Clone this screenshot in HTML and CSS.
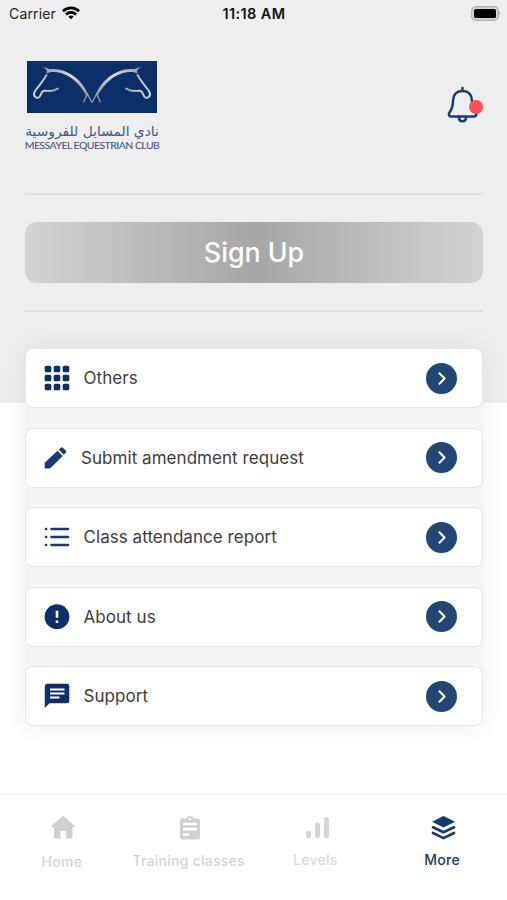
FILE: index.html
```
<!DOCTYPE html>
<html lang="en">
<head>
  <meta charset="utf-8">
  <title>Messayel Equestrian Club</title>
  <link rel="stylesheet" href="styles.css">
</head>
<body>
  <div class="status-bar">
    <div class="carrier">
      <span>Carrier</span>
      <svg width="18" height="14" viewBox="0 0 18 14" fill="none" stroke="#000" stroke-width="2.6">
        <path d="M1 5.2C5.5 .8 12.500 .8 17 5.200"/>
        <path d="M4 8.500C6.800 5.700 11.200 5.700 14 8.500"/>
        <path d="M6.300 10.500Q9 8.300 11.700 10.500L9 13.300z" fill="#000" stroke="none"/>
      </svg>
    </div>
    <span class="time">11:18 AM</span>
    <svg class="battery" width="30" height="15" viewBox="0 0 30 15">
      <rect x=".8" y=".8" width="26.400" height="13.400" rx="4" fill="#d8d8d8" stroke="#b4b4b4" stroke-width="1.500"/>
      <rect x="3" y="3" width="22" height="9" rx="1.500" fill="#000"/>
      <path d="M28.200 5.200Q30.400 7.500 28.200 9.800z" fill="#aaa"/>
    </svg>
  </div>

  <header class="header">
    <div class="logo">
      <svg width="130" height="52" viewBox="0 0 130 52">
        <defs>
          <linearGradient id="silver" x1="0" y1="0" x2="1" y2="1">
            <stop offset="0" stop-color="#8f98a5"/>
            <stop offset=".45" stop-color="#dcdde0"/>
            <stop offset="1" stop-color="#8c8e96"/>
          </linearGradient>
          <g id="horse">
            <path d="M16.500 5.800L23 8.200C40 6.500 55 19 61 33L60 36C52 21 40 9.800 23 11.200L19.500 12.500L20 9.700z" fill="url(#silver)"/>
            <path d="M19.500 14C16 20 12 25 8 30C5.500 34.500 8.500 38 12 36.300C14.500 34.500 13.500 30.500 17 29.800C22 29.500 25 31.500 31 27.500" fill="none" stroke="url(#silver)" stroke-width="1.900" stroke-linecap="round"/>
            <path d="M60.500 32Q58.500 37 56.500 41.500M60.500 33L65 41.500" fill="none" stroke="#9ca3af" stroke-width="1.200"/>
          </g>
        </defs>
        <rect width="130" height="52" fill="#0c2f68"/>
        <use href="#horse"/>
        <use href="#horse" transform="matrix(-1 0 0 1 130 0)"/>
      </svg>
      <span class="logo-arabic" lang="ar" dir="rtl">نادي المسايل للفروسية</span>
      <span class="logo-name">MESSAYEL EQUESTRIAN CLUB</span>
    </div>
    <div class="bell">
      <svg width="32" height="38" viewBox="0 0 32 38" fill="none" stroke="#153d71" stroke-width="2.500" stroke-linecap="round" stroke-linejoin="round">
        <path d="M15.500 2v3M15.500 5C9 5 6 9.500 6 15C6 21 5 23 2.500 26.500C1.200 28.500 2 30.500 4 30.500H27C29 30.500 30 28.500 28.700 26.500C26 23 25 21 25 15C25 9.500 22 5 15.500 5z"/>
        <path d="M12 31.500C12 36.500 19 36.500 19 31.500"/>
      </svg>
      <span class="dot"></span>
    </div>
  </header>

  <div class="signup">
    <button class="signup-button">Sign Up</button>
  </div>

  <main class="menu">
    <a class="card">
      <svg class="icon" viewBox="0 0 26 26" fill="#0d2f66">
        <rect x=".7" y=".7" width="6.600" height="6.600" rx="1.600"/><rect x="9.700" y=".7" width="6.600" height="6.600" rx="1.600"/><rect x="18.700" y=".7" width="6.600" height="6.600" rx="1.600"/>
        <rect x=".7" y="9.700" width="6.600" height="6.600" rx="1.600"/><rect x="9.700" y="9.700" width="6.600" height="6.600" rx="1.600"/><rect x="18.700" y="9.700" width="6.600" height="6.600" rx="1.600"/>
        <rect x=".7" y="18.700" width="6.600" height="6.600" rx="1.600"/><rect x="9.700" y="18.700" width="6.600" height="6.600" rx="1.600"/><rect x="18.700" y="18.700" width="6.600" height="6.600" rx="1.600"/>
      </svg>
      <span class="label">Others</span>
      <span class="arrow"><svg viewBox="0 0 30 30"><path d="M13 10l5 5-5 5"/></svg></span>
    </a>
    <a class="card">
      <svg class="icon" viewBox="0 0 26 26" fill="#163c70">
        <path d="M.7 17.800L13.500 5.800L18.700 11L6 23.500H2Q.7 23.500 .7 22.200z"/>
        <path d="M14.800 4.700L16.700 2.800Q17.800 1.800 18.900 2.800L21.700 5.600Q22.700 6.700 21.700 7.700L19.900 9.700z"/>
      </svg>
      <span class="label submit">Submit amendment request</span>
      <span class="arrow"><svg viewBox="0 0 30 30"><path d="M13 10l5 5-5 5"/></svg></span>
    </a>
    <a class="card">
      <svg class="icon" viewBox="0 0 26 26" fill="none" stroke="#153b70" stroke-width="2.600" stroke-linecap="round">
        <path d="M7.500 5h16.500M7.500 13h16.500M7.500 21h16.500M2 5h.1M2 13h.1M2 21h.1"/>
      </svg>
      <span class="label">Class attendance report</span>
      <span class="arrow"><svg viewBox="0 0 30 30"><path d="M13 10l5 5-5 5"/></svg></span>
    </a>
    <a class="card">
      <svg class="icon" viewBox="0 0 26 26">
        <circle cx="13" cy="12.700" r="12.400" fill="#0d2f66"/>
        <path d="M13 6.800v7M13 16.500v2.500" stroke="#fff" stroke-width="2.600"/>
      </svg>
      <span class="label">About us</span>
      <span class="arrow"><svg viewBox="0 0 30 30"><path d="M13 10l5 5-5 5"/></svg></span>
    </a>
    <a class="card">
      <svg class="icon" viewBox="0 0 26 26">
        <path d="M3.200 .8H23Q25.300 .8 25.300 3.100V18Q25.300 20.300 23 20.300H5.500L.8 25V3.300Q.8 .8 3.200 .8z" fill="#0d2f66"/>
        <path d="M6 6.500h14.500M6 10.500h14.500M6 14.500h9.500" stroke="#fff" stroke-width="2.200"/>
      </svg>
      <span class="label">Support</span>
      <span class="arrow"><svg viewBox="0 0 30 30"><path d="M13 10l5 5-5 5"/></svg></span>
    </a>
  </main>

  <nav class="tab-bar">
    <a class="tab home">
      <svg viewBox="0 0 28 28" fill="#d0d0d0"><path d="M14 1.500L26.500 13H23.500V23.500Q23.500 24.500 22.500 24.500H17V17H11.500V24.500H6Q5 24.500 5 23.500V13H1.500z"/></svg>
      <span>Home</span>
    </a>
    <a class="tab training">
      <svg viewBox="0 0 28 28">
        <path d="M6 4.500H10.500Q11.500 2 14 2T17.500 4.500H22Q24 4.500 24 6.500V23.500Q24 25.500 22 25.500H6Q4 25.500 4 23.500V6.500Q4 4.500 6 4.500z" fill="#d0d0d0"/>
        <circle cx="14" cy="5" r="1.300" fill="#fff"/>
        <path d="M7 10h14M7 15.200h14M7 20.500h6" stroke="#fff" stroke-width="2.700"/>
      </svg>
      <span>Training classes</span>
    </a>
    <a class="tab levels">
      <svg viewBox="0 0 28 28" stroke="#d4d4d4" stroke-width="5" stroke-linecap="round"><path d="M5.500 21.700v-2.500M14.500 21.700V11M23.500 21.700V5.500"/></svg>
      <span>Levels</span>
    </a>
    <a class="tab more active">
      <svg viewBox="0 0 28 28">
        <path d="M13.500 2L25 7.700L13.500 13.500L2 7.700z" fill="#153b70"/>
        <path d="M3 13.300L13.500 18.300L24 13.300M3 19L13.500 24.100L24 19" fill="none" stroke="#153b70" stroke-width="2.700" stroke-linecap="round" stroke-linejoin="round"/>
      </svg>
      <span>More</span>
    </a>
  </nav>
</body>
</html>
```
FILE: styles.css
```
* {
  box-sizing: border-box;
}

body {
  margin: 0;
  height: 900px;
  overflow: hidden;
  display: flex;
  flex-direction: column;
  font-family: Inter, "Noto Sans", sans-serif;
  color: #3d3d3d;
  background: linear-gradient(#eeeeee 403px, #ffffff 403px);
}

svg {
  display: block;
  flex: none;
}

.status-bar {
  height: 28px;
  padding: 0 6px 0 9px;
  display: grid;
  grid-template-columns: 1fr auto 1fr;
  align-items: center;
  font-size: 14px;
  line-height: 28px;
  color: #222;
}

.carrier {
  display: flex;
  align-items: center;
  gap: 6px;
  letter-spacing: 0.15px;
}

.carrier svg {
  margin-top: -3px;
}

.time {
  margin-right: 2px;
  font-size: 14.5px;
  font-weight: 600;
  letter-spacing: 0.4px;
  color: #111;
}

.battery {
  justify-self: end;
  margin-top: -1px;
}

.header {
  height: 165px;
  margin: 0 24px 0 25px;
  padding-top: 33px;
  display: flex;
  justify-content: space-between;
}

.logo {
  width: 134px;
  display: flex;
  flex-direction: column;
  align-items: center;
  white-space: nowrap;
  color: #425a82;
}

.logo-arabic {
  height: 17px;
  margin-top: 9px;
  font-family: "DejaVu Sans", sans-serif;
  font-size: 13.8px;
  line-height: 18px;
}

.logo-name {
  font-family: Lato, sans-serif;
  font-size: 10.4px;
  line-height: 12px;
  font-weight: 500;
  letter-spacing: -0.5px;
}

.bell {
  position: relative;
  width: 36px;
  height: 38px;
  margin-top: 25px;
}

.dot {
  position: absolute;
  top: 14px;
  right: 0;
  width: 14px;
  height: 14px;
  border-radius: 50%;
  background: #ff5058;
}

.signup {
  height: 119px;
  margin: 0 24px 0 25px;
  display: flex;
  align-items: center;
  border-top: 2px solid #e0e0e0;
  border-bottom: 2px solid #e0e0e0;
}

.signup-button {
  width: 100%;
  height: 61px;
  padding: 0;
  border: none;
  border-radius: 12px;
  background: linear-gradient(90deg, #d3d3d3, #a6a6a6 50%, #d3d3d3);
  color: #fff;
  font: 500 26.8px/61px Inter, sans-serif;
}

.menu {
  margin: 36px 24px 0 25px;
  display: flex;
  flex-direction: column;
  gap: 19.5px;
  border-radius: 8px;
  background: rgba(0, 0, 0, 0.04);
  box-shadow: 0 0 24px rgba(0, 0, 0, 0.07);
}

.card {
  height: 60px;
  padding: 0 25px 0 18px;
  display: flex;
  align-items: center;
  border: 1px solid #e4e4e4;
  border-radius: 8px;
  background: #fff;
}

.icon {
  width: 26px;
  height: 26px;
}

.label {
  flex: 1;
  margin-left: 13.5px;
  font-size: 17px;
  line-height: 24px;
  letter-spacing: 0.05px;
  white-space: nowrap;
}

.submit {
  margin-left: 11px;
}

.arrow {
  width: 31px;
  height: 31px;
  border-radius: 50%;
  background: #224773;
}

.arrow svg {
  fill: none;
  stroke: #fff;
  stroke-width: 2;
  stroke-linecap: round;
  stroke-linejoin: round;
}

.tab-bar {
  height: 107px;
  margin-top: auto;
  padding-top: 19px;
  display: flex;
  border-top: 2px solid #f6f6f6;
  background: #fff;
}

.tab {
  flex: 1;
  display: flex;
  flex-direction: column;
  align-items: center;
  font-size: 14px;
  font-weight: 500;
  line-height: 20px;
  letter-spacing: 0.25px;
  white-space: nowrap;
  color: #d4d4d4;
}

.tab svg {
  width: 28px;
  height: 28px;
  margin-bottom: 9px;
}

.tab span {
  margin-right: 3px;
}

.home svg {
  margin-bottom: 10px;
}

.levels svg,
.more svg {
  margin-bottom: 8px;
}

.levels {
  color: #dadada;
}

.active {
  color: #153b70;
}
```
